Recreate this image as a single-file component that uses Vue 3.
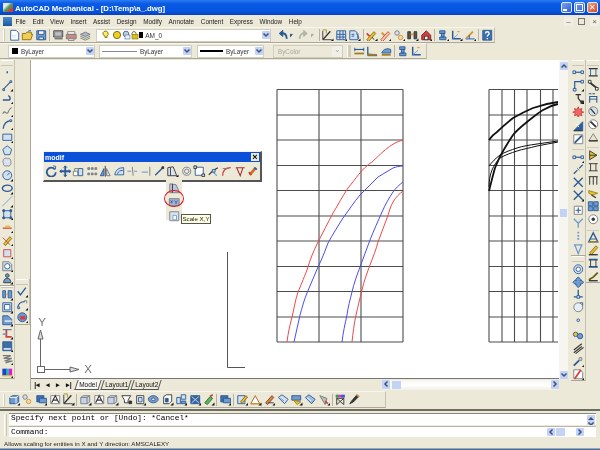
<script setup>
import { h } from 'vue'

// palette for the small toolbar glyphs
const N = '#2a5a96', B = '#6f9bd0', L = '#d3e0f0', G = '#7a7a7a', K = '#333', Y = '#e8c030', R = '#d04040', W = '#fff', O = '#d89030'

const icons = {
  new: [['M3 1.5h6l3 3v8H3z', N, W], ['M4.5 7h5M4.5 9h5', L]],
  open: [['M1.5 5h4l1-1.5h5V6h1.5l-2 6H1.5z', '#8a6a10', '#f0cf50'], ['M8 2.5l3-1', N]],
  save: [['M2 2h10v10H2z', N, B], ['M4 2h6v4H4z', N, W], ['M4.5 9h5v3h-5z', N, L]],
  plot: [['M2 2h10v7H2z', K, '#e6e6e6'], ['M3 3h8v5H3z', G, '#b8c0cc'], ['M3 11h9', K]],
  prev: [['M3 3h8v3H3z', G, W], ['M1.5 6h11v5h-11z', G, '#c88'], ['M4 11h6v2H4z', G, W]],
  pub: [['M1.5 6L7 3.5 12.5 6 7 8.5z', G, '#a8b8c8'], ['M1.5 8L7 10.5 12.5 8', G], ['M1.5 10L7 12.5 12.5 10', G]],
  undo: [['M11 11C11 6 8 4 4 5', N, 'none', 2.2], ['M6.5 1.5L2.5 5l4 3.5z', N, N]],
  redo: [['M3 11C3 6 6 4 10 5', '#b5b3a8', 'none', 2], ['M7.5 1.5l4 3.5-4 3.5z', '#b5b3a8', '#b5b3a8']],
  tinyd: [['M1 6h5L3.5 9z', N, N]],
  tinyg: [['M1 6h5L3.5 9z', '#aaa', '#aaa']],
  xl: [['M2 2v10h10', K], ['M2.5 11.5l8-9', K, 'none', 1.4], ['M2 1h4v4', '#a89020']],
  gridb: [['M2 2h10v10H2z', N, L], ['M5.5 2v10M9 2v10M2 6h10M2 9h10', N]],
  docb: [['M2 2h6l3 3v7H2z', N, L], ['M9 5c2 1 3 3 3 6', N], ['M4 6h3M4 8h3', N]],
  pen1: [['M2 12l8-9 2 2-8 9z', '#8a6a10', Y], ['M2 5l3 3', R, 'none', 2], ['M8 9l2 3', K]],
  pen2: [['M2 12l8-9 2 2-8 9z', R, '#f2d0a0'], ['M3 4l3 3', O, 'none', 2]],
  gear: [['M2 4.5a2.5 2.5 0 1 0 5 0a2.5 2.5 0 1 0-5 0', G, L], ['M6 9.5a2.5 2.5 0 1 0 5 0a2.5 2.5 0 1 0-5 0', O, '#f0d8b0']],
  beam: [['M2 3h3v8H2zM9 3h3v8H9z', K, '#555'], ['M5 6h4', O, 'none', 2]],
  house: [['M2 7l5-5 5 5v5H2z', '#7a2020', R], ['M5 8h4v4H5z', K, '#eee']],
  blue1: [['M3 2h6v3H3zM5 5h3v4H5zM3 9h7v3H3z', N, B]],
  axes: [['M3 2v9h9', N, 'none', 1.6], ['M3 11l6-5', B], ['M8 3h3', O]],
  angle: [['M2 11l8-8', O, 'none', 2], ['M2 11h10', B, 'none', 2], ['M6 11V7', N]],
  help: [['M2 1.5h10v11H2z', N, '#3b6fb0'], ['M5 5c0-2.5 4-2.5 4 0C9 7 7 6.5 7 8.5M7 10v1.5', W, 'none', 1.5]],
  dim1: [['M1.5 5h11', N, 'none', 1.3], ['M1.5 9.5h11', '#a08020', 'none', 2], ['M2 3v4M12 3v4', N]],
  dim2: [['M2 2v8l10 1v1H2z', N, '#2b5fa0'], ['M2 11h10', '#a08020', 'none', 2]],
  dim3: [['M2 9C3 5 8 3 12 5v4z', N, B], ['M2 11h10', '#a08020', 'none', 2]],
  point: [['M6.2 7h1.6', N, 'none', 2.2]],
  line: [['M2.5 11.5l9-9', N, 'none', 1.2], ['M2 11h2v2H2zM10 2h2v2h-2z', N, L]],
  pline: [['M2 9h6c3 0 3-4 0-5', N, 'none', 1.6]],
  spline: [['M2 10c2-6 4 2 6-2s2-5 4-5', G, 'none', 1.2]],
  arc: [['M2.5 12C3 7 6 3.5 11 3', N, 'none', 1.5], ['M10 2h2v2h-2z', N, L]],
  rect: [['M2 3.5h10v7H2z', N, L]],
  poly: [['M7 2l5 4-2 6H4L2 6z', N, L]],
  cloud: [['M2.5 5c0-3 4-3 5-2 3-1 4 2 3.5 4 1 3-2 5-4 4-3 1-5-1-4-3-1-1-1-2-.5-3z', G, '#d8e2f0']],
  circ: [['M2 7a5 5 0 1 0 10 0a5 5 0 1 0-10 0', N, L], ['M7 7l3-3', N]],
  ell: [['M1.5 7a5.5 3.5 0 1 0 11 0a5.5 3.5 0 1 0-11 0', N, 'none', 1.6]],
  xline: [['M1.5 12.5l11-11', B, 'none', 1]],
  region: [['M3 3h8v8H3z', N, L], ['M2 2h2v2H2zM10 2h2v2h-2zM2 10h2v2H2zM10 10h2v2h-2z', N, N]],
  hatch: [['M2 8h10', R, 'none', 1.4], ['M5 6h5', Y, 'none', 2]],
  pencil: [['M3 11l7-8 2 2-7 8z', '#8a6a10', Y], ['M2 4l8 8', R]],
  redrect: [['M3 3h8v8H3z', R, L]],
  ring: [['M2 2h7l3 3v7H2z', G, L], ['M4 7a3 3 0 1 0 6 0a3 3 0 1 0-6 0', N, W]],
  figure: [['M7 2a2 2 0 1 0 .1 0zM3 12c0-4 2-5 4-5s4 1 4 5z', K, B]],
  dimb: [['M2 3h3v8H2zM8 3h4v8H8z', N, B], ['M5 7h3', O]],
  frame: [['M2 2h10v10H2z', N, L], ['M4 4h6v6H4z', N, W]],
  folder: [['M2 2h6l4 4v6H2z', N, B], ['M4 8h8', L, 'none', 2]],
  redtee: [['M2 3h10', N], ['M6 3v8h6', R, 'none', 2], ['M2 8h4', B, 'none', 2]],
  boxb: [['M2 2h10v10H2z', N, '#3d6ea8'], ['M3 10h8', L, 'none', 2]],
  coil: [['M2 3h9l-8 3h9l-8 3h9l-8 2', G, 'none', 1.3]],
  color: [['M1.5 3h5v8h-5z', 'none', '#2040d0'], ['M6 3h3v8H6z', 'none', '#10c0c0'], ['M9 3h3.5v8H9z', 'none', '#f010d0'], ['M1.5 11h11', Y, 'none', 1.5]],
  check: [['M2 7l3 4 6-8', N, 'none', 1.5]],
  arcA: [['M2 11c0-4 3-7 8-7', N, 'none', 1.4], ['M9 3h3v3', G, L], ['M2 10h2v2H2z', N, W]],
  sphere: [['M2 7a5 5 0 1 0 10 0a5 5 0 1 0-10 0', N, B], ['M5 6h5v3H5z', R, R]],
  dimh: [['M1.5 7h11', N, 'none', 1.3], ['M1 5.5h3v3H1zM10 5.5h3v3h-3z', N, L]],
  dimv: [['M3 12V3h8', N, 'none', 1.3], ['M1.5 10.5h3v3h-3zM10 1.5h3v3h-3z', N, L]],
  ordin: [['M4 3h6M7 3v4l3 4', K, 'none', 1.4], ['M10 10h3v3h-3z', K, K]],
  burst: [['M7 2l1.2 3 3-1-1 3 3 1-3 1 1 3-3-1-1.2 3-1.2-3-3 1 1-3-3-1 3-1-1-3 3 1z', R, '#e66']],
  wedge: [['M2 12L12 2v10z', N, '#2a5c9e'], ['M2 12h10', K], ['M4 4l4 4', W]],
  wedge2: [['M2 2h10v10H2z', G, W], ['M3 11l8-8', N, 'none', 2]],
  xcross: [['M2 2l10 10M12 2L2 12', N, 'none', 1.5]],
  brk: [['M2 12l4-4M8 6l4-4', N, 'none', 1.4], ['M5.5 5.5l3 3', G]],
  boxc: [['M2.5 2.5h9v9h-9z', G, W], ['M7 4v6M4 7h6', N, 'none', 1.2]],
  yfork: [['M2 2l5 5v5M12 2L7 7', B, 'none', 1.5]],
  dots: [['M7 2v10', B, 'none', 2, '2 1.5']],
  vang: [['M2 2h10M3 2l4 10 4-10', B, 'none', 1.4]],
  target: [['M2 7a5 5 0 1 0 10 0a5 5 0 1 0-10 0', N, L], ['M4.5 7a2.5 2.5 0 1 0 5 0a2.5 2.5 0 1 0-5 0', N, W]],
  move4: [['M7 1l3 3-1 1h2l2 2-2 2H9l1 1-3 3-3-3 1-1H3L1 7l2-2h2L4 4z', N, B]],
  perp: [['M2 10h10M7 2v8', N, 'none', 1.5], ['M5.5 8.5h3v3h-3z', N, L]],
  ccirc: [['M2 7a5 5 0 1 0 10 0a5 5 0 1 0-10 0', G, '#e8eef8'], ['M9 2h3v3', N]],
  dot2: [['M5.5 7a1.5 1.5 0 1 0 3 0a1.5 1.5 0 1 0-3 0', N, L]],
  chain: [['M1.5 6a2.5 2.5 0 1 0 5 0a2.5 2.5 0 1 0-5 0', N, Y], ['M6 8a3 3 0 1 0 6 0a3 3 0 1 0-6 0', N, B]],
  slashes: [['M2 9l9-7M2 12l9-7M4 13l9-7', K, 'none', 1.2]],
  wrench: [['M2 12l6-6', N, 'none', 2], ['M8 3h3v3H8z', G, L]],
  nored: [['M2 2h7l3 3v7H2z', G, W], ['M3 12l7-10', R, 'none', 2]],
  ibeam: [['M2 3h10M2 11h10', K, 'none', 1.5], ['M4 3v8M10 3v8', N]],
  bone: [['M2 3l10 8', K, 'none', 2], ['M1.5 1.5h3v3h-3zM9.5 9.5h3v3h-3z', K, W]],
  rack: [['M3 12V5h8v7M2 2h3M6 2h3', N, 'none', 1.2], ['M3 8h8', N]],
  gauge: [['M2 7a5 5 0 1 0 10 0a5 5 0 1 0-10 0', G, L], ['M4 4l5 6', K, 'none', 1.4]],
  gauge2: [['M2 7a5 5 0 1 0 10 0a5 5 0 1 0-10 0', G, W], ['M4 4l6 6', K, 'none', 2]],
  trif: [['M2 11l5-8 5 8z', G, '#e8e4d0'], ['M2 11h10', K, 'none', 1.5]],
  yellk: [['M3 2l8 5-8 5z', K, Y], ['M3 7h8', K]],
  frh: [['M2 3h10M2 11h10M4 3v8M10 3v8', K, 'none', 1]],
  frm: [['M2 3h10M3 3v9M7 3v9M11 3v9', K, 'none', 1.1]],
  bolt: [['M2 4l10 3-6 2-4-2z', '#a08010', Y], ['M5 9l5 3', K, 'none', 1.5]],
  quad: [['M1.5 2h5v4.5h-5zM7.5 2h5v4.5h-5zM1.5 7.5h5V12h-5zM7.5 7.5h5V12h-5z', N, B]],
  ringd: [['M2 7a5 5 0 1 0 10 0a5 5 0 1 0-10 0', G, W], ['M5.5 7a1.5 1.5 0 1 0 3 0a1.5 1.5 0 1 0-3 0', K, K]],
  aup: [['M2 12l5-10 5 10z', N, 'none', 1.6], ['M4 9h6', N], ['M2 12h10', '#a08020', 'none', 1.5]],
  penk: [['M3 10l7-8 2 2-7 8z', '#8a6a10', Y], ['M2 12h10', K, 'none', 1.5]],
  beam2: [['M2 3h10M2 11h10', N, 'none', 2], ['M4 3v8M10 3v8', K]],
  weld: [['M2 11l5-3 5-5', '#6a5a10', 'none', 2], ['M2 12h10', K, 'none', 1.5]],
  rot: [['M11 5a5 5 0 1 0 1 3', N, 'none', 2], ['M9 1l3 .5-.5 3.5', N]],
  moveb: [['M7 1v12M1 7h12', N, 'none', 2], ['M5 3l2-2 2 2M5 11l2 2 2-2M3 5L1 7l2 2M11 5l2 2-2 2', N]],
  copy: [['M1.5 7h5v5h-5z', G, W], ['M7 4h5v8H7z', N, L], ['M3 7V4h4', G]],
  array: [['M2 3h2v2H2zM6 3h2v2H6zM10 3h2v2h-2zM2 9h2v2H2zM6 9h2v2H6zM10 9h2v2h-2z', G, B]],
  mirr: [['M7 1v12', K], ['M5.5 4v8H1.5z', N, B], ['M8.5 4v8h4z', G, '#dde']],
  offs: [['M2 11c1-6 5-8 10-8v8z', N, L], ['M5 10c1-3 3-4 6-4', N]],
  trim: [['M1.5 7h4.5M9 7h3.5', B, 'none', 1.2], ['M7 2l1 10', G]],
  ext: [['M2 8h7', B, 'none', 1.2], ['M11 2v10', G]],
  lk: [['M2.5 11.5l9-9', N, 'none', 1.5], ['M10 2h2v2h-2z', K, K]],
  scale: [['M2 12V3l6-1 4 10z', K, '#dde4f0'], ['M5 3v9', K]],
  lens: [['M3 7a4.5 4.5 0 1 0 9 0a4.5 4.5 0 1 0-9 0', G, '#e8e8e8'], ['M5 7a2.5 2.5 0 1 0 5 0a2.5 2.5 0 1 0-5 0', G]],
  fram2: [['M2.5 2.5h9v9h-9z', N, W], ['M1 1h3v3H1zM10 10h3v3h-3z', K, L]],
  fork: [['M2 11l4-4 6-4', K, 'none', 1.3], ['M6 7l5 5', B, 'none', 1.3], ['M6 5h3v3H6z', N, L]],
  curve: [['M3 12c0-6 3-9 9-9', R, 'none', 1.4], ['M3 4h7', G]],
  vee: [['M2 3h10M3 3l4 9 3-9', '#a03030', 'none', 1.2]],
  fire: [['M3 11l7-8', '#cc7020', 'none', 3], ['M8 3l3 2', '#3060b0', 'none', 2], ['M2 8l3 3', R, 'none', 2]],
  scale1: [['M2 12V2l7 1 4 9z', G, '#b8c8e0'], ['M5 2v10', K]],
  xy: [['M1.5 3h11v8h-11z', G, '#9fb4d4'], ['M3 8l2-3M5 8L3 5M7 5l2 2 2-2M9 7v2', N]],
  scale3: [['M2 2h10v10H2z', G, '#d8e4f4'], ['M5.5 6h4v5h-4z', B, W]],
  prism: [['M2 5l3-2h7v7l-3 2H2z', N, B], ['M2 5h7v7M9 5l3-2', W]],
  draw: [['M2 3h10v9H2z', G, W], ['M3 11l4-8 4 8M4.5 8h5', K, 'none', 1.2]],
  cube: [['M2 5l3-2h7v7l-3 2H2z', G, '#c4d4ec'], ['M2 5h7v7M9 5l3-2', G]],
  funnel: [['M2 3h10l-3 5v3H5V8z', K, W], ['M10 9h3v3h-3z', K, K]],
  can: [['M3 3h8v9H3z', K, W], ['M5 5h4v5H5z', N, L]],
  torus: [['M1.5 7a5.5 4 0 1 0 11 0a5.5 4 0 1 0-11 0', N, '#7a9cc8'], ['M5 7a2 1.3 0 1 0 4 0a2 1.3 0 1 0-4 0', N, W]],
  box3: [['M3 4l3-2h6v7l-3 3H3z', K, '#fff'], ['M5 6h3v4H5z', N, N]],
  boxes: [['M2 5h4v7H2zM7 2h5v5H7z', N, L], ['M7 9h5v3H7z', N, B]],
  solid: [['M2 3h10v9H2z', N, '#3562a0'], ['M3 11l8-7M3 4l8 7', L]],
  green: [['M3 11l6-7 3 2-6 7z', '#2a7a2a', '#5fb05f'], ['M9 4l3-2', R, 'none', 2]],
  view1: [['M2 3h8v7H2z', N, '#3f6fb0'], ['M5 6h8v5H5z', N, B]],
  penb: [['M2 3h8v9H2z', N, L], ['M5 10l6-7 2 1.5-6 7z', '#8a6a10', Y]],
  tri: [['M2 12L7 3l5 9z', '#a06020', W], ['M2 12h10', O, 'none', 1.5]],
  pen3: [['M3 11l7-8 2 2-7 8z', '#703030', O], ['M6 11h6', K]],
  tag: [['M1.5 5l4-3 7 5-4 5z', N, L], ['M4 6l4 3', B]],
  bb: [['M2 3h10v5H2z', N, B], ['M4 8l4 5 4-3z', '#a08010', Y]],
  tagb: [['M1.5 5l4-3 7 5-4 5z', N, '#9cc0e6'], ['M3 5l5 4', W]],
  tagr: [['M2 3l8 3-2 7z', G, '#bbb'], ['M8 9l3 3', R, 'none', 2]],
  mix: [['M2 2h10v3H2z', 'none', '#e030c0'], ['M2 2h3v3H2z', 'none', '#20b040'], ['M8 2h4v3H8z', 'none', '#3060e0'], ['M3 13V6h8v7M3 6l8 7M11 6l-8 7', K]],
  brush: [['M2 12l2-3 6-7 2 2-6 6z', K, K], ['M10 2l2 2', O, 'none', 2]],
}

const Tool = (props) => {
  const fly = props.n.endsWith('*')
  const parts = icons[props.n.replace('*', '')] || []
  const paths = parts.map((p) =>
    h('path', { d: p[0], stroke: p[1], fill: p[2] || 'none', 'stroke-width': p[3] || 1, 'stroke-dasharray': p[4] }),
  )
  if (fly) paths.push(h('path', { d: 'M14 14h-3.5l3.5-3.5z', fill: '#111' }))
  return h('span', { class: 'tool' }, [h('svg', { width: 12.5, height: 12.5, viewBox: '0 0 14 14' }, paths)])
}
Tool.props = ['n']

const chevPaths = { u: 'M1.5 5.5L4 3l2.5 2.5', d: 'M1.5 2.5L4 5l2.5-2.5', l: 'M5.5 1.5L3 4l2.5 2.5', r: 'M2.5 1.5L5 4 2.5 6.5' }
const Chev = (props) =>
  h('span', { class: 'sbtn' }, [
    h('svg', { width: 8, height: 8, viewBox: '0 0 8 8' }, [
      h('path', { d: chevPaths[props.d], stroke: '#3c5078', fill: 'none', 'stroke-width': 1.5 }),
    ]),
  ])
Chev.props = ['d']

const menus = ['File', 'Edit', 'View', 'Insert', 'Assist', 'Design', 'Modify', 'Annotate', 'Content', 'Express', 'Window', 'Help']
const layerBulbs = ['M3 1.5a2.5 2.5 0 1 1 3 4.5v1.5H4V6a2.5 2.5 0 0 1-1-4.5z']

const filePart = ['new', 'open', 'save']
const plotPart = ['plot', 'prev', 'pub']
const barA = ['xl*', 'gridb*', 'docb*']
const barB = ['pen1*', 'pen2*', 'gear*', 'beam*', 'house*']
const barC = ['blue1*', 'axes*', 'angle*']
const dimsA = ['dim1', 'dim2', 'dim3']
const dimsB = ['blue1', 'axes']

const leftA = ['point', 'line*', 'pline*', 'spline*', 'arc*', 'rect*', 'poly', 'cloud', 'circ*', 'ell*', 'xline*', 'region*', 'hatch*', 'pencil*', 'redrect*', 'ring*', 'figure*']
const leftB = ['dimb*', 'frame*', 'folder*', 'redtee*', 'boxb*', 'coil*', 'color*']
const leftC = ['check*', 'arcA*', 'sphere*']

const rightA = [['dimh', 'dimv*', 'ordin*', 'burst'], ['wedge', 'wedge2'], ['dimh*', 'brk', 'xcross', 'xcross*'], ['boxc', 'yfork', 'dots', 'vang']]
const rightA2 = [['target', 'move4', 'perp', 'ccirc', 'dot2'], ['chain', 'slashes', 'wrench*', 'nored*']]
const rightB = [['ibeam', 'bone', 'rack', 'gauge', 'gauge2', 'trif'], ['yellk', 'frh', 'frm', 'bolt', 'quad', 'ringd'], ['aup', 'penk', 'beam2', 'weld']]

const floating = ['rot', 'moveb', 'copy', 'array', 'mirr', 'offs', 'trim', 'ext', 'lk', 'scale*', 'lens', 'fram2', 'fork', 'curve', 'vee', 'fire']
const flyout = ['scale1', 'xy', 'scale3']

const bottomA = ['prism*', 'gear', 'view1*', 'draw', 'xl*']
const bottomB = ['cube*', 'draw', 'cube*', 'funnel', 'can*', 'torus', 'box3*', 'boxes*', 'solid*', 'green*']
const bottomC = ['view1*']
const bottomD = ['penb*', 'tri*', 'pen3*', 'tag', 'bb*', 'tagb', 'tagr*']
const bottomE = ['mix', 'brush']

// grid lines of the two drawn charts, in page coordinates
const rows = [89.5, 115, 140, 165.5, 190.5, 216, 241, 266.5, 291.5, 317, 342]
const colsA = [277, 319, 361, 403]
const colsB = [489, 502, 514.5, 527, 540.5, 553]
const curves = [
  { c: '#f04848', d: 'M403 140C390 143 380 155 372 162 362 168 355 180 348 188 342 197 338 205 333 213 328 223 323 232 318 242 313 252 310 260 307 270 303 280 301 285 298 292 295 301 294 309 292 317 290 325 288 333 287 342' },
  { c: '#4c4cf0', d: 'M403 166C399 166 396 167 393 168 388 171 383 174 378 177 372 183 366 189 360 195 354 202 349 210 343 218 338 226 333 234 328 243 325 251 322 259 318 267 314 276 311 284 307 293 304 300 302 308 300 315 298 324 296 333 294 342' },
  { c: '#4c4cf0', d: 'M403 182C399 185 396 188 393 192 389 198 385 205 382 212 378 221 374 230 370 240 367 249 363 258 360 267 357 275 354 283 352 292 350 300 348 307 347 315 345 324 343 333 342 342' },
  { c: '#f04848', d: 'M403 191C399 194 396 197 393 202 390 207 389 213 387 218 384 226 381 234 378 242 376 250 373 257 370 265 367 273 364 281 362 290 360 298 358 306 356 315 354 324 353 333 352 342' },
]
const inks = [
  { w: 1.8, d: 'M489 140C491 137 494 134 497 132 502 127 508 122 513 118 520 114 526 111 533 108 541 105 550 103 558 102' },
  { w: 1.8, d: 'M489 191C491 183 493 175 495 168 497 163 499 158 502 153 505 147 509 141 513 135 517 130 522 126 527 122 532 118 538 113 543 110 548 107 553 105 558 104' },
  { w: 1, d: 'M489 166C492 162 496 158 500 155 505 152 511 150 517 148 523 146 530 145 537 144 544 143 551 142 558 141' },
  { w: 1, d: 'M489 187C489 181 490 175 492 170 494 165 497 161 500 158 505 155 511 153 517 151 523 149 530 148 537 146 544 145 551 143 558 142' },
]
</script>

<template>
  <div class="app">
    <div class="title">
      <span class="appicon"></span>
      <span class="title-text">AutoCAD Mechanical - [D:\Temp\a_.dwg]</span>
      <span class="winbtn min"><i></i></span>
      <span class="winbtn max"><b></b></span>
      <span class="winbtn close">✕</span>
    </div>

    <div class="menu">
      <span class="docicon"></span>
      <span v-for="m in menus" :key="m">{{ m }}</span>
      <span class="mdi">
        <em>–</em><em class="mdimax"></em><em>×</em>
      </span>
    </div>

    <div class="strip s1">
      <div class="bar b1">
        <i class="grip"></i>
        <Tool v-for="t in filePart" :key="t" :n="t" />
        <i class="sep"></i>
        <Tool v-for="t in plotPart" :key="t" :n="t" />
        <div class="dd layer">
          <svg width="42" height="10" viewBox="0 0 42 10" class="lay-icons">
            <path :d="layerBulbs[0]" fill="#f8f060" stroke="#8a7a10" />
            <circle cx="16" cy="5" r="3.6" fill="#f0d020" stroke="#807010" />
            <circle cx="25" cy="4" r="2.8" fill="#c0d0e0" stroke="#5070a0" />
            <rect x="24" y="5" width="5" height="4" fill="#e8f0f8" stroke="#5070a0" stroke-width=".6" />
            <circle cx="33" cy="3.6" r="2" fill="none" stroke="#807010" />
            <rect x="31" y="4.5" width="6" height="4.5" fill="#d8c020" stroke="#807010" stroke-width=".6" />
            <rect x="38" y="2" width="4" height="6" fill="#000" />
          </svg>
          <span class="dd-text am">AM_0</span>
          <Chev class="ddb" d="d" />
        </div>
        <Tool n="undo" />
        <span class="tiny"><Tool n="tinyd" /></span>
        <Tool n="redo" />
        <span class="tiny"><Tool n="tinyg" /></span>
        <i class="sep"></i>
        <Tool v-for="t in barA" :key="t" :n="t" />
        <i class="sep"></i>
        <Tool v-for="t in barB" :key="t" :n="t" />
        <i class="sep"></i>
        <Tool v-for="t in barC" :key="t" :n="t" />
        <i class="sep"></i>
        <Tool n="help" />
      </div>
    </div>

    <div class="strip s2">
      <div class="bar b2">
        <div class="dd d1">
          <span class="swatch"></span>
          <span class="dd-text">ByLayer</span>
          <Chev class="ddb" d="d" />
        </div>
        <div class="dd d2">
          <span class="ln thin"></span>
          <span class="dd-text">ByLayer</span>
          <Chev class="ddb" d="d" />
        </div>
        <div class="dd d3">
          <span class="ln thick"></span>
          <span class="dd-text">ByLayer</span>
          <Chev class="ddb" d="d" />
        </div>
        <div class="dd d4">
          <span class="dd-text off">ByColor</span>
          <span class="ddb ddoff">⌄</span>
        </div>
        <i class="grip g2"></i>
        <Tool v-for="t in dimsA" :key="t" :n="t" />
        <i class="sep"></i>
        <Tool v-for="t in dimsB" :key="t" :n="t" />
      </div>
    </div>

    <div class="mid">
      <div class="left">
        <div class="rail">
          <div class="vbar">
            <i class="vgrip"></i>
            <Tool v-for="t in leftA" :key="t" :n="t" />
          </div>
          <div class="vbar lower">
            <i class="vgrip"></i>
            <Tool v-for="t in leftB" :key="t" :n="t" />
          </div>
        </div>
        <div class="rail second">
          <div class="vbar">
            <i class="vgrip"></i>
            <Tool v-for="t in leftC" :key="t" :n="t" />
          </div>
        </div>
      </div>

      <div class="work">
        <div class="work-top">
          <div class="drawing">
            <svg class="sheet" width="528" height="319" viewBox="31 60 528 319">
              <g stroke="#4c4c4c" stroke-width="1.1">
                <line v-for="y in rows" :key="'a' + y" x1="277" x2="403" :y1="y" :y2="y" />
                <line v-for="x in colsA" :key="'b' + x" :x1="x" :x2="x" y1="89.5" y2="342" />
                <line v-for="y in rows" :key="'c' + y" x1="489" x2="558" :y1="y" :y2="y" />
                <line v-for="x in colsB" :key="'d' + x" :x1="x" :x2="x" y1="89.5" y2="342" />
              </g>
              <path v-for="c in curves" :key="c.d" :d="c.d" :stroke="c.c" fill="none" />
              <path v-for="c in inks" :key="c.d" :d="c.d" :stroke-width="c.w" stroke="#111" fill="none" />
              <path d="M227.5 252V367.5H245" stroke="#555" fill="none" />
              <g stroke="#666" fill="none">
                <path d="M40.5 366V339" />
                <path d="M40.5 330l2.5 9h-5z" fill="#ddd" />
                <path d="M44 369.5H71" />
                <path d="M79 369.5l-9-2.5v5z" fill="#ddd" />
                <rect x="37.5" y="366.5" width="7" height="6" fill="#fff" />
              </g>
              <text x="42" y="326" class="ucs" text-anchor="middle">Y</text>
              <text x="88" y="373" class="ucs" text-anchor="middle">X</text>
            </svg>

            <div class="float">
              <div class="float-title">
                <span>modif</span>
                <span class="float-x">×</span>
              </div>
              <div class="float-tools">
                <Tool v-for="t in floating" :key="t" :n="t" />
              </div>
              <div class="flyout">
                <Tool v-for="t in flyout" :key="t" :n="t" />
              </div>
              <span class="ring"></span>
              <span class="tip">Scale X,Y</span>
            </div>
          </div>
          <div class="vscroll">
            <Chev d="u" />
            <span class="vthumb"></span>
            <Chev d="d" />
          </div>
        </div>
        <div class="work-bottom">
          <div class="nav">
            <span>|◂</span><span>◂</span><span>▸</span><span>▸|</span>
          </div>
          <div class="tab active"><span>Model</span></div>
          <div class="tab"><span>Layout1</span></div>
          <div class="tab"><span>Layout2</span></div>
          <div class="hscroll">
            <Chev d="l" />
            <span class="hthumb"></span>
            <span class="grow"></span>
            <Chev d="r" />
          </div>
        </div>
      </div>

      <div class="right">
        <div class="rail rcol">
          <div class="vbar rbar">
            <i class="vgrip"></i>
            <template v-for="(g, i) in rightA" :key="i">
              <i v-if="i" :class="i === 2 ? 'vsep wide' : 'vsep'"></i>
              <Tool v-for="t in g" :key="t" :n="t" />
            </template>
          </div>
          <div class="vbar rbar second-part">
            <i class="vgrip"></i>
            <template v-for="(g, i) in rightA2" :key="i">
              <i v-if="i" class="vsep"></i>
              <Tool v-for="t in g" :key="t" :n="t" />
            </template>
          </div>
        </div>
        <div class="rail rcol">
          <div class="vbar rbar">
            <i class="vgrip"></i>
            <template v-for="(g, i) in rightB" :key="i">
              <i v-if="i" class="vsep wide"></i>
              <Tool v-for="t in g" :key="t" :n="t" />
            </template>
          </div>
        </div>
      </div>
    </div>

    <div class="strip s3">
      <div class="bar b3">
        <i class="grip"></i>
        <Tool v-for="(t, i) in bottomA" :key="i" :n="t" />
        <i class="sep"></i>
        <Tool v-for="(t, i) in bottomB" :key="i" :n="t" />
        <i class="sep"></i>
        <Tool v-for="(t, i) in bottomC" :key="i" :n="t" />
        <i class="sep"></i>
        <Tool v-for="(t, i) in bottomD" :key="i" :n="t" />
        <i class="sep"></i>
        <Tool v-for="(t, i) in bottomE" :key="i" :n="t" />
      </div>
    </div>

    <div class="cmd">
      <i class="cmd-grip"></i>
      <div class="cmd-box">
        <div class="cmd-line first-line">
          <span>Specify next point or [Undo]: *Cancel*</span>
          <span class="cmd-spin"><Chev d="u" /><Chev d="d" /></span>
        </div>
        <div class="cmd-line second-line">
          <span>Command:</span>
          <span class="cmd-h"><Chev d="l" /><span class="hthumb"></span><span class="gap"></span><Chev d="r" /></span>
        </div>
      </div>
    </div>

    <div class="status">Allows scaling for entities in X and Y direction: AMSCALEXY</div>
    <div class="edge"></div>
  </div>
</template>

<style>
html,
body {
  margin: 0;
  overflow: hidden;
}
</style>

<style scoped>
.app {
  width: 600px;
  height: 450px;
  display: flex;
  flex-direction: column;
  background: #ece9d8;
  font-family: "Liberation Sans", Arial, sans-serif;
  color: #222;
  overflow: hidden;
  filter: blur(0.35px);
}

/* title bar */
.title {
  height: 15px;
  flex: none;
  display: flex;
  align-items: center;
  background: linear-gradient(#2b7bf0, #0a5ae6 25%, #0554e0 75%, #0a3fbe);
  color: #fff;
}
.appicon {
  width: 10px;
  height: 9px;
  margin-left: 3px;
  background: linear-gradient(135deg, #e8e8e8 30%, #4aa060 50%, #d04030 80%);
}
.title-text {
  margin-left: 2px;
  font-size: 7.8px;
  font-weight: bold;
  padding-top: 1px;
  flex: 1;
}
.winbtn {
  width: 11px;
  height: 11px;
  margin-right: 2px;
  border: 0.5px solid #dfe8fa;
  border-radius: 2px;
  background: linear-gradient(135deg, #7ca2ec, #2a5fd6);
  display: flex;
  align-items: center;
  justify-content: center;
  font-size: 8px;
  box-sizing: border-box;
}
.winbtn.min i {
  width: 4px;
  height: 2px;
  background: #fff;
  margin: 5px 4px 0 0;
}
.winbtn.max b {
  width: 5px;
  height: 5px;
  border: 1px solid #fff;
}
.winbtn.close {
  background: linear-gradient(135deg, #f0a080, #d84518);
  margin-right: 2px;
}

/* menu */
.menu {
  height: 12px;
  flex: none;
  display: flex;
  align-items: center;
  gap: 6.6px;
  font-size: 6.4px;
  color: #222;
}
.docicon {
  width: 9px;
  height: 9px;
  margin-left: 3px;
  margin-right: -3px;
  background: linear-gradient(#4a8ad0, #1c5a98);
}
.mdi {
  margin-left: auto;
  display: flex;
  gap: 3px;
  padding-right: 1px;
}
.mdi em {
  width: 9px;
  height: 9px;
  font-style: normal;
  line-height: 9px;
  text-align: center;
  font-size: 8px;
  color: #555;
  background: #f1efe4;
}
.mdi .mdimax {
  width: 5px;
  height: 5px;
  margin: 1px 2px;
  background: transparent;
  border: 1px solid #777;
}

/* horizontal toolbars */
.strip {
  flex: none;
  display: flex;
  align-items: stretch;
}
.s1 {
  height: 16px;
}
.s2 {
  height: 17px;
}
.s3 {
  height: 18px;
  padding-top: 1px;
  box-sizing: border-box;
}
.bar {
  display: flex;
  align-items: center;
  background: #ece9d8;
  border-bottom: 1px solid #aca899;
  border-right: 1px solid #c4c1b0;
  border-top: 1px solid #f8f6ec;
  box-sizing: border-box;
}
.b1 {
  width: 495px;
}
.b2 {
  width: 427px;
  padding-left: 8px;
  height: 16px;
}
.b3 {
  width: 386px;
}
.grip {
  width: 2px;
  height: 12px;
  margin: 0 2px 0 3px;
  background: #cfccba;
  border-left: 1px solid #fff;
  box-sizing: border-box;
}
.g2 {
  margin: 0 1px 0 4px;
  width: 4px;
}
.sep {
  width: 1px;
  height: 12px;
  margin: 0 1px;
  background: #b6b3a3;
  flex: none;
}
.tool {
  width: 13.7px;
  height: 14px;
  flex: none;
  display: flex;
  align-items: center;
  justify-content: center;
}
.tiny {
  width: 7px;
  flex: none;
  display: flex;
  justify-content: center;
  overflow: hidden;
}

/* combo boxes */
.dd {
  height: 13px;
  flex: none;
  display: flex;
  align-items: center;
  background: #fff;
  border: 1px solid #d0cebe;
  box-sizing: border-box;
  font-size: 6.3px;
  color: #333;
}
.dd-text {
  flex: 1;
}
.ddb {
  width: 10px;
  height: 11px;
  flex: none;
  background: #c1d2ee;
}
.layer {
  width: 175px;
  margin: 0 5px 0 4px;
}
.lay-icons {
  margin-left: 4px;
}
.am {
  margin-left: 2px;
  font-size: 6.5px;
}
.d1 {
  width: 87px;
  margin-right: 4px;
}
.d2 {
  width: 93px;
  margin-right: 5px;
}
.d3 {
  width: 67px;
  margin-right: 9px;
}
.d4 {
  width: 70px;
  background: #ece9d8;
}
.d4 .ddoff {
  background: #f1f0e6;
  color: #aaa;
  font-size: 8px;
  line-height: 8px;
  text-align: center;
}
.off {
  margin-left: 4px;
  color: #aaa79a;
}
.swatch {
  width: 6px;
  height: 6px;
  margin: 0 3px 0 3px;
  background: #000;
}
.ln {
  flex: none;
  margin-left: 2px;
  margin-right: 3px;
}
.thin {
  width: 35px;
  height: 1px;
  background: #888;
}
.thick {
  width: 23px;
  height: 2px;
  background: #000;
}

/* middle */
.mid {
  height: 330px;
  flex: none;
  display: flex;
  margin-top: 0;
}
.left {
  width: 31px;
  flex: none;
  display: flex;
  border-right: 1px solid #aca899;
  box-sizing: border-box;
}
.rail {
  width: 15px;
  flex: none;
  display: flex;
  flex-direction: column;
}
.vbar {
  display: flex;
  flex-direction: column;
  align-items: center;
  border-right: 1px solid #c4c1b0;
  border-bottom: 1px solid #aca899;
  box-sizing: border-box;
}
.vbar .tool {
  width: 14px;
  height: 12.9px;
}
.vgrip {
  width: 12px;
  height: 6px;
  flex: none;
  border-top: 1px solid #fff;
  border-bottom: 1px solid #c9c6b5;
  box-sizing: border-box;
}
.second {
  padding-top: 219px;
  box-sizing: border-box;
}
.lower .vgrip {
  height: 2px;
}
.work {
  flex: 1;
  min-width: 0;
  display: flex;
  flex-direction: column;
}
.work-top {
  flex: 1;
  display: flex;
  min-height: 0;
}
.drawing {
  width: 528px;
  flex: none;
  position: relative;
  background: #fff;
  border-bottom: 1px solid #777;
}
.sheet {
  display: block;
}
.ucs {
  font-size: 11.5px;
  fill: #777;
  font-family: "Liberation Sans", sans-serif;
}

/* scrollbars */
.vscroll {
  width: 9px;
  flex: none;
  display: flex;
  flex-direction: column;
  align-items: center;
  background: #f6f5ef;
  padding-top: 2px;
  box-sizing: border-box;
}
.sbtn {
  width: 8px;
  height: 8px;
  flex: none;
  display: flex;
  background: #c3d3f5;
  border-radius: 1px;
}
.vthumb {
  width: 7px;
  height: 8px;
  margin-top: 139px;
  margin-bottom: auto;
  background: #c3d3f5;
}
.work-bottom {
  height: 11px;
  flex: none;
  display: flex;
  align-items: center;
  font-size: 6.5px;
  padding-left: 1px;
  margin-top: 0;
}
.nav {
  display: flex;
  width: 44px;
  color: #111;
  font-size: 7px;
  font-weight: bold;
  box-sizing: border-box;
}
.nav span {
  width: 10.5px;
  text-align: center;
}
.tab {
  height: 10px;
  margin-right: 2px;
  padding: 0 2px;
  transform: skewX(-18deg);
  border-left: 1px solid #555;
  border-right: 1px solid #555;
  border-bottom: 1px solid #555;
  box-sizing: border-box;
  line-height: 9px;
  background: #ece9d8;
  color: #111;
}
.tab span {
  display: block;
  transform: skewX(18deg);
}
.tab.active {
  width: 24px;
  background: #f8f8f4;
}
.tab:not(.active) {
  width: 28px;
}
.hscroll {
  position: absolute;
  left: 382px;
  width: 177px;
  height: 10px;
  display: flex;
  align-items: center;
  gap: 2px;
  background: linear-gradient(#f6f5ef, #fff 50%, #f1f0e6);
}
.hscroll .sbtn {
  height: 9px;
}
.hthumb {
  width: 9px;
  height: 8px;
  flex: none;
  background: #c3d3f5;
}
.grow {
  flex: 1;
}
.right {
  width: 29px;
  flex: none;
  margin-left: 3px;
  display: flex;
  gap: 0;
}
.rcol {
  width: 15px;
}
.rbar .tool {
  height: 12.9px;
}
.second-part {
  flex: none;
}
.vsep {
  height: 2px;
  flex: none;
}
.vsep.wide {
  height: 5px;
  border-bottom: 1px solid #cfccba;
  box-sizing: border-box;
  width: 12px;
}

/* floating toolbar */
.float {
  position: absolute;
  left: 12px;
  top: 91px;
  width: 219px;
  height: 31px;
  background: #ece9d8;
  border: 1px solid #f4f2e8;
  border-right: 2px solid #555;
  border-bottom: 2px solid #555;
  box-sizing: border-box;
}
.float-title {
  height: 10px;
  background: #0a50d8;
  color: #fff;
  font-size: 7px;
  font-weight: bold;
  display: flex;
  align-items: center;
  justify-content: space-between;
  padding: 0 1px 0 1px;
}
.float-x {
  width: 8px;
  height: 8px;
  background: #ece9d8;
  color: #000;
  line-height: 8px;
  text-align: center;
  font-size: 9px;
}
.float-tools {
  display: flex;
  padding-left: 1px;
  margin-top: 2px;
}
.float-tools .tool {
  width: 13.45px;
}
.flyout {
  position: absolute;
  left: 122px;
  top: 25px;
  width: 16px;
  height: 43px;
  background: #ece9d8;
  padding-top: 4px;
  box-sizing: border-box;
  display: flex;
  flex-direction: column;
  align-items: center;
  z-index: 1;
}
.ring {
  position: absolute;
  left: 120px;
  top: 38px;
  width: 20px;
  height: 17px;
  border: 1.8px solid #e01020;
  border-radius: 50%;
  box-sizing: border-box;
  z-index: 2;
}
.tip {
  position: absolute;
  left: 137px;
  top: 62px;
  width: 30px;
  height: 10px;
  background: #ffffe1;
  border: 1px solid #555;
  box-sizing: border-box;
  font-size: 6.2px;
  line-height: 8px;
  text-align: center;
  white-space: nowrap;
  z-index: 3;
}

/* command area */
.cmd {
  height: 28px;
  flex: none;
  display: flex;
  border-top: 2px solid #6f6d62;
  box-sizing: border-box;
  margin-top: 1px;
  padding-top: 2px;
}
.cmd-grip {
  width: 3px;
  height: 22px;
  margin: 1px 2px 0 4px;
  border-left: 1px solid #fff;
  border-right: 1px solid #c9c6b5;
  box-sizing: border-box;
}
.cmd-box {
  width: 587px;
  display: flex;
  flex-direction: column;
  font-family: "Liberation Mono", monospace;
  font-size: 7.8px;
  color: #000;
}
.cmd-line {
  height: 12px;
  display: flex;
  align-items: center;
  justify-content: space-between;
  padding-left: 2px;
  background: #fff;
  border-top: 1px solid #8a887c;
  box-sizing: border-box;
}
.first-line > span:first-child {
  margin-top: -4px;
}
.second-line {
  margin-top: 1px;
  border-top: 1px solid #b8b6a8;
  height: 11px;
}
.cmd-spin {
  display: flex;
  flex-direction: column;
  width: 10px;
  align-items: center;
}
.cmd-spin .sbtn {
  height: 5px;
  overflow: hidden;
}
.cmd-h {
  display: flex;
  align-items: center;
  gap: 1px;
  padding-right: 12px;
}
.gap {
  width: 9px;
}

/* status */
.status {
  height: 12px;
  flex: none;
  padding: 2px 0 0 4px;
  font-size: 6.2px;
  line-height: 10px;
  color: #222;
  background: #ece9d8;
  border-bottom: 1px solid #aca899;
  box-sizing: border-box;
}
.edge {
  height: 2px;
  flex: none;
  background: #3a6fb8;
}
</style>
